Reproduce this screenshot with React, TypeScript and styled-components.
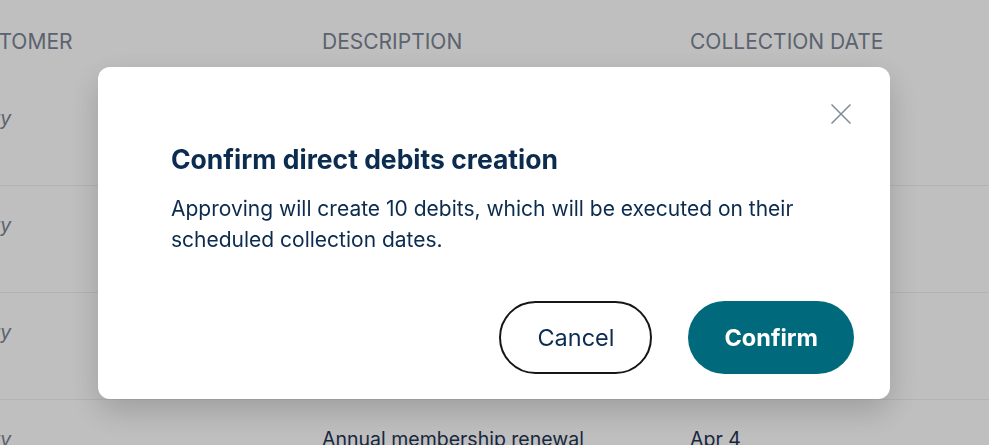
import React from "react";
import styled, { createGlobalStyle } from "styled-components";

const GlobalStyle = createGlobalStyle`
    html, body {
        margin: 0;
        padding: 0;
        background: #ffffff;
        overflow: hidden;
    }
    body {
        font-family: Inter, "Noto Sans", sans-serif;
    }
`;

const Page = styled.div`
    width: 989px;
    height: 445px;
    overflow: hidden;
`;

const Table = styled.div`
    margin-left: -46px;
    width: 1100px;
`;

const HeaderRow = styled.div`
    display: grid;
    grid-template-columns: 368px 368px 1fr;
    padding: 30px 0 26px;
    line-height: 23px;
    font-size: 21px;
    text-transform: uppercase;
    color: #7a8494;
`;

const Row = styled.div`
    display: grid;
    grid-template-columns: 368px 368px 1fr;
    height: 107px;
    box-sizing: border-box;
    padding-top: 27px;
    line-height: 24px;
    font-size: 19.5px;
    border-bottom: 1px solid #efefef;
    color: #1f3554;
`;

const Muted = styled.span`
    font-style: italic;
    color: #7a8494;
    padding-left: 9px;
`;

const Overlay = styled.div`
    position: fixed;
    inset: 0;
    background: rgba(0, 0, 0, 0.25);
    display: flex;
    align-items: flex-start;
    justify-content: center;
    padding-top: 67px;
`;

const Dialog = styled.div`
    width: 792px;
    box-sizing: border-box;
    margin-left: -1px;
    background: #ffffff;
    border-radius: 12px;
    box-shadow: 0 12px 32px rgba(0, 0, 0, 0.18);
    padding: 36px 36px 25px;
    display: flex;
    flex-direction: column;
`;

const CloseRow = styled.div`
    display: flex;
    justify-content: flex-end;
    padding-right: 2px;
`;

const CloseButton = styled.button`
    width: 22px;
    height: 22px;
    padding: 0;
    border: none;
    background: transparent;
    display: flex;
    align-items: center;
    justify-content: center;
    cursor: pointer;
`;

const Content = styled.div`
    padding: 0 36px 0 37px;
`;

const Title = styled.h2`
    margin: 18px 0 0;
    font-size: 26.5px;
    line-height: 32px;
    font-weight: 700;
    color: #0b2b4f;
`;

const Text = styled.p`
    margin: 18px 0 0;
    font-size: 21px;
    line-height: 31px;
    color: #0b2b4f;
`;

const Footer = styled.div`
    display: flex;
    justify-content: flex-end;
    gap: 36px;
    margin-top: 46px;
`;

const Button = styled.button<{ $primary?: boolean }>`
    height: 73px;
    padding: 0 36px;
    border-radius: 37px;
    font-family: Inter, "Noto Sans", sans-serif;
    font-size: 23.5px;
    cursor: pointer;
    box-sizing: border-box;
    border: ${({ $primary }) => ($primary ? "none" : "2px solid #161616")};
    background: ${({ $primary }) => ($primary ? "#006a7c" : "#ffffff")};
    color: ${({ $primary }) => ($primary ? "#ffffff" : "#0b2b4f")};
    font-weight: ${({ $primary }) => ($primary ? 700 : 400)};
`;

const rows = [
    { customer: "Mary", description: "Annual membership renewal", date: "Apr 1" },
    { customer: "Mary", description: "Annual membership renewal", date: "Apr 2" },
    { customer: "Mary", description: "Annual membership renewal", date: "Apr 3" },
    { customer: "Mary", description: "Annual membership renewal", date: "Apr 4" },
];

const App: React.FC = () => {
    return (
        <Page>
            <GlobalStyle />
            <Table>
                <HeaderRow>
                    <div>Customer</div>
                    <div>Description</div>
                    <div>Collection date</div>
                </HeaderRow>
                {rows.map((row) => (
                    <Row key={row.date}>
                        <Muted>{row.customer}</Muted>
                        <div>{row.description}</div>
                        <div>{row.date}</div>
                    </Row>
                ))}
            </Table>
            <Overlay>
                <Dialog role="dialog">
                    <CloseRow>
                        <CloseButton aria-label="Close">
                            <svg width="20" height="20" viewBox="0 0 20 20" fill="none">
                                <path d="M0.5 0.5L19.5 19.5M19.5 0.5L0.5 19.5" stroke="#7e8c9a" strokeWidth="1.5" />
                            </svg>
                        </CloseButton>
                    </CloseRow>
                    <Content>
                        <Title>Confirm direct debits creation</Title>
                        <Text>
                            Approving will create 10 debits, which will be executed on their
                            scheduled collection dates.
                        </Text>
                    </Content>
                    <Footer>
                        <Button type="button">Cancel</Button>
                        <Button type="button" $primary>
                            Confirm
                        </Button>
                    </Footer>
                </Dialog>
            </Overlay>
        </Page>
    );
};

export default App;
